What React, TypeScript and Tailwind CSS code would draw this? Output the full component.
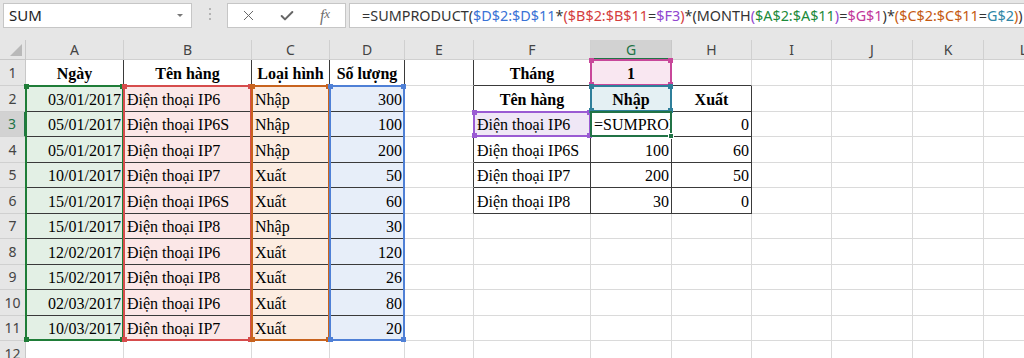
import { Check, X } from "lucide-react";
import clsx from "clsx";

type Col = { key: string; w: string; px: number };

const COLS: Col[] = [
  { key: "A", w: "w-[98px]", px: 98 },
  { key: "B", w: "w-[128px]", px: 128 },
  { key: "C", w: "w-[78px]", px: 78 },
  { key: "D", w: "w-[75px]", px: 75 },
  { key: "E", w: "w-[69px]", px: 69 },
  { key: "F", w: "w-[117px]", px: 117 },
  { key: "G", w: "w-[81px]", px: 81 },
  { key: "H", w: "w-[80px]", px: 80 },
  { key: "I", w: "w-[80px]", px: 80 },
  { key: "J", w: "w-[81px]", px: 81 },
  { key: "K", w: "w-[71px]", px: 71 },
  { key: "L", w: "w-[80px]", px: 80 },
];

const ROW_H = [26, 25.5, 25.5, 25.5, 25.5, 25.5, 25.5, 25.5, 25.5, 25.5, 25.5, 25.5];

type Cell = { v: string; a?: "l" | "r" | "c"; b?: boolean };
const t = (v: string): Cell => ({ v, a: "l" });
const n = (v: string): Cell => ({ v, a: "r" });
const h = (v: string): Cell => ({ v, a: "c", b: true });

const DATA: [string, string, string, string][] = [
  ["03/01/2017", "Điện thoại IP6", "Nhập", "300"],
  ["05/01/2017", "Điện thoại IP6S", "Nhập", "100"],
  ["05/01/2017", "Điện thoại IP7", "Nhập", "200"],
  ["10/01/2017", "Điện thoại IP7", "Xuất", "50"],
  ["15/01/2017", "Điện thoại IP6S", "Xuất", "60"],
  ["15/01/2017", "Điện thoại IP8", "Nhập", "30"],
  ["12/02/2017", "Điện thoại IP6", "Xuất", "120"],
  ["15/02/2017", "Điện thoại IP8", "Xuất", "26"],
  ["02/03/2017", "Điện thoại IP6", "Xuất", "80"],
  ["10/03/2017", "Điện thoại IP7", "Xuất", "20"],
];

const SUMMARY: Record<number, Cell[]> = {
  1: [h("Tháng"), h("1")],
  2: [h("Tên hàng"), h("Nhập"), h("Xuất")],
  3: [t("Điện thoại IP6"), t("=SUMPRODUCT("), n("0")],
  4: [t("Điện thoại IP6S"), n("100"), n("60")],
  5: [t("Điện thoại IP7"), n("200"), n("50")],
  6: [t("Điện thoại IP8"), n("30"), n("0")],
};

function cellAt(r: number, c: number): Cell | null {
  if (r === 1 && c < 4) return h(["Ngày", "Tên hàng", "Loại hình", "Số lượng"][c]);
  if (r >= 2 && r <= 11 && c < 4) {
    const row = DATA[r - 2];
    return c === 0 || c === 3 ? n(row[c]) : t(row[c]);
  }
  if (SUMMARY[r] && c >= 5) return SUMMARY[r][c - 5] ?? null;
  return null;
}

function inTable(r: number, c: number) {
  if (r >= 1 && r <= 11 && c >= 0 && c <= 3) return true;
  if (r === 1 && (c === 5 || c === 6)) return true;
  if (r >= 2 && r <= 6 && c >= 5 && c <= 7) return true;
  return false;
}

function fillFor(r: number, c: number) {
  if (r >= 2 && r <= 11) {
    if (c === 0) return "bg-[#e3f0e5]";
    if (c === 1) return "bg-[#fbe7e7]";
    if (c === 2) return "bg-[#fcece1]";
    if (c === 3) return "bg-[#e7eef9]";
  }
  if (r === 3 && c === 5) return "bg-[#efe7f6]";
  if (r === 1 && c === 6) return "bg-[#f9e7f1]";
  if (r === 2 && c === 6) return "bg-[#e4f0f3]";
  return "bg-white";
}

// colour outlines drawn over the referenced ranges
const RANGES = [
  { c: 0, r1: 2, r2: 11, border: "border-[#1f7d38]", dot: "bg-[#1f7d38]" },
  { c: 1, r1: 2, r2: 11, border: "border-[#d64c4c]", dot: "bg-[#d64c4c]" },
  { c: 2, r1: 2, r2: 11, border: "border-[#c8631e]", dot: "bg-[#c8631e]" },
  { c: 3, r1: 2, r2: 11, border: "border-[#4f80d6]", dot: "bg-[#4f80d6]" },
  { c: 5, r1: 3, r2: 3, border: "border-[#9a5bd3]", dot: "bg-[#9a5bd3]" },
  { c: 6, r1: 1, r2: 1, border: "border-[#c8479a]", dot: "bg-[#c8479a]" },
  { c: 6, r1: 2, r2: 2, border: "border-[#2f7f9a]", dot: "bg-[#2f7f9a]" },
];

const HEAD_W = 26;
const HEAD_H = 20;

function colLeft(c: number) {
  return HEAD_W + COLS.slice(0, c).reduce((s, col) => s + col.px, 0);
}
function rowTop(r: number) {
  return HEAD_H + ROW_H.slice(0, r - 1).reduce((s, v) => s + v, 0);
}

function FormulaBar() {
  return (
    <div className="flex h-[40px] items-start gap-0 bg-[#e6e6e6] pt-[3px] pl-[3px]">
      <div className="relative flex h-[25px] w-[189px] shrink-0 items-center border border-[#c6c6c6] bg-white pl-[5px] text-[15px] text-[#222]">
        SUM
        <span className="absolute top-[10px] right-[8px] h-0 w-0 border-x-[3px] border-t-[3px] border-x-transparent border-t-[#777]" />
      </div>
      <div className="flex w-[35px] shrink-0 flex-col items-center gap-[3px] pt-[5px]">
        <span className="h-[2px] w-[2px] bg-[#b4b4b4]" />
        <span className="h-[2px] w-[2px] bg-[#b4b4b4]" />
        <span className="h-[2px] w-[2px] bg-[#b4b4b4]" />
      </div>
      <div className="flex h-[25px] w-[119px] shrink-0 items-center border border-[#c6c6c6] bg-white text-[#666]">
        <div className="flex w-[40px] justify-center">
          <X className="size-[17px]" strokeWidth={1.4} />
        </div>
        <div className="flex w-[38px] justify-center">
          <Check className="size-[16px]" strokeWidth={3} />
        </div>
        <div className="flex w-[38px] justify-center font-['Liberation_Serif'] text-[16px] italic text-[#707070]">
          f<span className="text-[13px]">x</span>
        </div>
      </div>
      <div className="ml-[3px] flex h-[25px] flex-1 items-center overflow-hidden border border-r-0 border-[#c6c6c6] bg-white pl-[12px] text-[14.4px] whitespace-nowrap text-[#333]">
        <span>=SUMPRODUCT(</span>
        <span className="text-[#3a72d6]">$D$2:$D$11</span>
        <span>*</span>
        <span className="text-[#d43d3d]">(</span>
        <span className="text-[#d43d3d]">$B$2:$B$11</span>
        <span>=</span>
        <span className="text-[#9046cf]">$F3</span>
        <span className="text-[#d43d3d]">)</span>
        <span>*(MONTH</span>
        <span className="text-[#9046cf]">(</span>
        <span className="text-[#1c8a3a]">$A$2:$A$11</span>
        <span className="text-[#9046cf]">)</span>
        <span>=</span>
        <span className="text-[#c2389a]">$G$1</span>
        <span>)*</span>
        <span className="text-[#c55a11]">(</span>
        <span className="text-[#c55a11]">$C$2:$C$11</span>
        <span>=</span>
        <span className="text-[#2f86a6]">G$2</span>
        <span className="text-[#c55a11]">)</span>
        <span>)</span>
      </div>
    </div>
  );
}

function ColumnHeaders() {
  return (
    <div className="flex h-[20px]">
      <div className="relative h-[20px] w-[26px] shrink-0 border-r border-b border-[#c8c8c8] bg-[#e6e6e6]">
        <span className="absolute right-[3px] bottom-[3px] h-0 w-0 border-b-[12px] border-l-[12px] border-b-[#b9b9b9] border-l-transparent" />
      </div>
      {COLS.map((col) =>
        col.key === "G" ? (
          <div
            key={col.key}
            className={clsx(
              col.w,
              "flex h-[20px] shrink-0 items-center justify-center border-r border-b-2 border-r-[#c8c8c8] border-b-[#217346] bg-[#d2d2d2] pt-[1px] text-[14px] text-[#217346]"
            )}
          >
            {col.key}
          </div>
        ) : (
          <div
            key={col.key}
            className={clsx(
              col.w,
              "flex h-[20px] shrink-0 items-center justify-center border-r border-b border-[#d0d0d0] bg-[#e6e6e6] text-[14px] text-[#444]"
            )}
          >
            {col.key}
          </div>
        )
      )}
    </div>
  );
}

function SheetRow({ r }: { r: number }) {
  const height = r === 1 ? "h-[26px]" : "h-[25.5px]";
  const active = r === 3;
  return (
    <div className={clsx("flex", height)}>
      <div
        className={clsx(
          "flex w-[26px] shrink-0 items-center justify-center border-b border-[#d0d0d0] text-[14px]",
          height,
          active
            ? "border-r-2 border-r-[#217346] bg-[#d2d2d2] text-[#217346]"
            : "border-r border-r-[#c8c8c8] bg-[#e6e6e6] text-[#444]"
        )}
      >
        {r}
      </div>
      {COLS.map((col, c) => {
        const cell = cellAt(r, c);
        const rightBlack = inTable(r, c) || inTable(r, c + 1);
        const bottomBlack = inTable(r, c) || inTable(r + 1, c);
        return (
          <div
            key={col.key}
            className={clsx(
              col.w,
              height,
              "flex shrink-0 items-end overflow-hidden border-r border-b pb-[2px] font-['Liberation_Serif'] text-[16px] leading-[18px] whitespace-nowrap text-black",
              rightBlack ? "border-r-[#3a3a3a]" : "border-r-[#dadada]",
              bottomBlack ? "border-b-[#3a3a3a]" : "border-b-[#dadada]",
              fillFor(r, c),
              r === 3 && c === 6 && "bg-white",
              cell?.a === "r" && "justify-end pr-[2px]",
              cell?.a === "c" && "justify-center",
              cell?.a === "l" && "pl-[3px]",
              cell?.b && "font-bold"
            )}
          >
            {cell?.v}
          </div>
        );
      })}
    </div>
  );
}

function Handles({ dot }: { dot: string }) {
  return (
    <>
      <span className={clsx("absolute -top-[3px] -left-[3px] h-[5px] w-[5px]", dot)} />
      <span className={clsx("absolute -top-[3px] -right-[3px] h-[5px] w-[5px]", dot)} />
      <span className={clsx("absolute -bottom-[3px] -left-[3px] h-[5px] w-[5px]", dot)} />
      <span className={clsx("absolute -right-[3px] -bottom-[3px] h-[5px] w-[5px]", dot)} />
    </>
  );
}

export default function App() {
  const rows = Array.from({ length: 12 }, (_, i) => i + 1);
  const g3Left = colLeft(6) - 1;
  const g3Top = rowTop(3) - 1;
  return (
    <div className="h-[358px] w-[1024px] overflow-hidden bg-white font-['Noto_Sans','Open_Sans',sans-serif]">
      <FormulaBar />
      <div className="relative">
        <ColumnHeaders />
        {rows.map((r) => (
          <SheetRow key={r} r={r} />
        ))}

        {RANGES.map((rg, i) => {
          const left = colLeft(rg.c) - 1;
          const top = rowTop(rg.r1) - 1;
          const bottom = rowTop(rg.r2 + 1) - 1;
          return (
            <div
              key={i}
              className={clsx("pointer-events-none absolute border-2", rg.border)}
              style={{
                left,
                top,
                width: COLS[rg.c].px + 1,
                height: bottom - top + 1,
              }}
            >
              <Handles dot={rg.dot} />
            </div>
          );
        })}

        {/* active cell being edited */}
        <div
          className="pointer-events-none absolute border-2 border-[#217346]"
          style={{ left: g3Left, top: g3Top, width: COLS[6].px + 1, height: ROW_H[2] + 1 }}
        >
          <span className="absolute -right-[4px] -bottom-[4px] h-[6px] w-[6px] border border-white bg-[#217346]" />
        </div>
      </div>
    </div>
  );
}
